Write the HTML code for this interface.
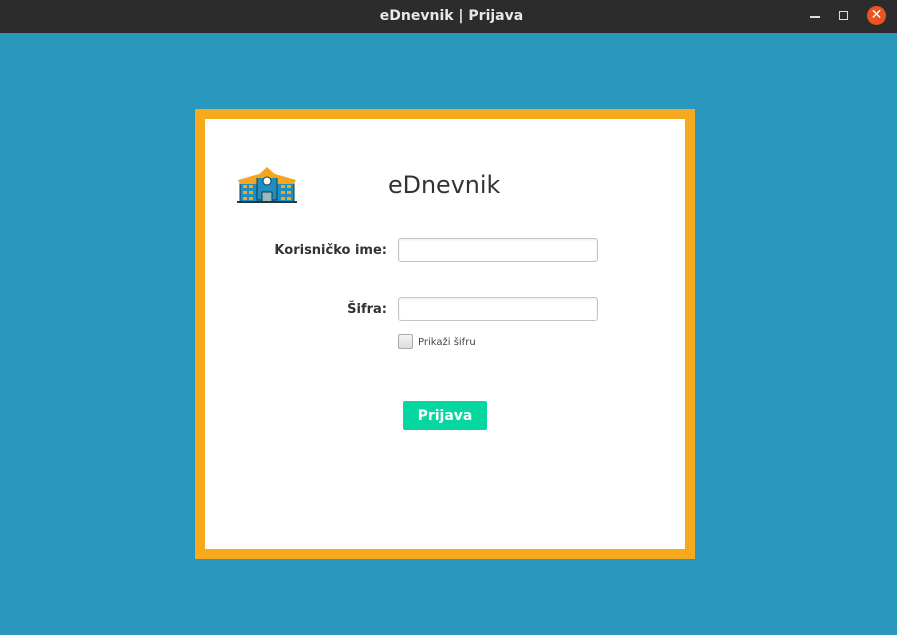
<!DOCTYPE html>
<html><head><meta charset="utf-8"><style>
body{margin:0;width:897px;height:635px;background:#2a97bd;position:relative;overflow:hidden;font-family:"DejaVu Sans","Liberation Sans",sans-serif}
.tb{position:absolute;left:0;top:0;width:897px;height:33px;background:#2c2c2c;color:#e8e8e8;font-weight:bold;font-size:14px;text-align:center;line-height:33px}
.card{position:absolute;left:195px;top:109px;width:480px;height:430px;border:10px solid #f6a91c;background:#fff}
.a{position:absolute}
.lbl{position:absolute;font-weight:bold;font-size:13px;color:#333;text-align:right}
.in{position:absolute;width:198px;height:22px;border:1px solid #c4c4c4;border-radius:3px;background:#fff;box-shadow:inset 0 1px 2px rgba(0,0,0,.08)}
</style></head><body>
<div class="tb" style="padding-left:6px;box-sizing:border-box">eDnevnik | Prijava</div>
<div class="a" style="left:810px;top:16px;width:10px;height:1.5px;background:#ddd"></div>
<div class="a" style="left:839px;top:11px;width:7px;height:7px;border:1.5px solid #ddd"></div>
<div class="a" style="left:867px;top:6px;width:19px;height:19px;border-radius:50%;background:#e95420;color:#fff;font-size:14px;line-height:19px;text-align:center;font-weight:bold">✕</div>
<div class="card"></div>
<svg class="a" style="left:237px;top:166px" width="60" height="38" viewBox="0 0 60 38">
<rect x="3" y="14" width="54" height="22" fill="#1e8fc0" stroke="#1b3a4b"/>
<polygon points="1,14 22,8 38,8 59,14 57,18 3,18" fill="#f4a623"/>
<polygon points="20,12 30,2 40,12 40,34 20,34" fill="#1e8fc0" stroke="#1b3a4b"/>
<polygon points="18,12 30,1 42,12" fill="#f4a623"/>
<circle cx="30" cy="15" r="4" fill="#fff" stroke="#1b3a4b"/>
<rect x="25" y="26" width="10" height="10" fill="#9bb" stroke="#1b3a4b"/>
<g fill="#f4a623"><rect x="6" y="19" width="4" height="3"/><rect x="12" y="19" width="4" height="3"/><rect x="6" y="25" width="4" height="3"/><rect x="12" y="25" width="4" height="3"/><rect x="6" y="31" width="4" height="3"/><rect x="12" y="31" width="4" height="3"/>
<rect x="44" y="19" width="4" height="3"/><rect x="50" y="19" width="4" height="3"/><rect x="44" y="25" width="4" height="3"/><rect x="50" y="25" width="4" height="3"/><rect x="44" y="31" width="4" height="3"/><rect x="50" y="31" width="4" height="3"/></g>
<rect x="0" y="35" width="60" height="2" fill="#1b3a4b"/>
</svg>
<div class="a" style="left:388px;top:171px;font-size:23.8px;color:#333">eDnevnik</div>
<div class="lbl" style="left:260px;top:243px;width:127px">Korisničko ime:</div>
<div class="in" style="left:398px;top:238px"></div>
<div class="lbl" style="left:260px;top:302px;width:127px">Šifra:</div>
<div class="in" style="left:398px;top:297px"></div>
<div class="a" style="left:398px;top:334px;width:13px;height:13px;border:1px solid #aaa;border-radius:2px;background:linear-gradient(#f4f4f4,#ddd)"></div>
<div class="a" style="left:418px;top:337px;font-size:10px;color:#444">Prikaži šifru</div>
<div class="a" style="left:403px;top:401px;width:84px;height:29px;background:#06d6a0;border-radius:2px;color:#fff;font-weight:bold;font-size:14px;text-align:center;line-height:30px">Prijava</div>
</body></html>
